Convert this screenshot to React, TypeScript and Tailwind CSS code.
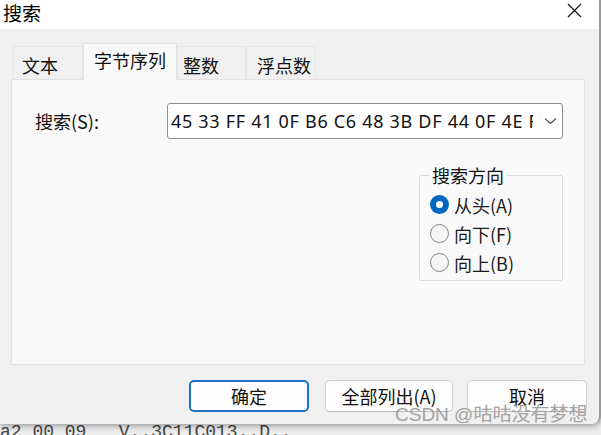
const cjk = "font-['Noto_Sans_CJK_SC',sans-serif]";

const Radio = ({ label, checked }: { label: string; checked?: boolean }) => (
    <div className="flex items-center h-[29px] gap-[5px]">
        {checked ? (
            <span className="w-[19px] h-[19px] rounded-full bg-[#0067c0] flex items-center justify-center">
                <span className="w-[7px] h-[7px] rounded-full bg-white" />
            </span>
        ) : (
            <span className="w-[19px] h-[19px] rounded-full border border-[#858585] bg-[#f6f6f6]" />
        )}
        <span className="text-[18px] leading-none text-[#1b1b1b]">{label}</span>
    </div>
);

const Tab = ({ label, w, pl, active }: { label: string; w: string; pl: string; active?: boolean }) =>
    active ? (
        <div className={`${w} h-[37px] -mb-px relative z-10 bg-[#f9f9f9] border border-b-0 border-[#e2e2e2] flex justify-center pt-[5px] text-[18px] leading-[22px] text-[#111]`}>
            {label}
        </div>
    ) : (
        <div className={`${w} ${pl} h-[33px] bg-[#f0f0f0] border border-b-0 border-[#e6e6e6] pt-[7px] text-[18px] leading-[22px] text-[#111]`}>
            {label}
        </div>
    );

const App = () => {
    return (
        <div className={`relative w-[601px] h-[435px] overflow-hidden bg-[#ededed] ${cjk}`}>
            <div className="relative z-10 h-[424px] flex flex-col bg-[#f0f0f0] border-r-2 border-[#9a9a9a] rounded-br-[8px] shadow-[0_2px_6px_rgba(0,0,0,0.35)]">
                {/* title bar */}
                <div className="h-[29px] bg-white flex justify-between items-start">
                    <span className="pl-[3px] pt-[1px] text-[19px] leading-[24px] text-black">搜索</span>
                    <svg width="15" height="15" viewBox="0 0 15 15" className="mt-[3px] mr-[17px]">
                        <path d="M1 1 L14 14 M14 1 L1 14" stroke="#1a1a1a" strokeWidth="1.3" />
                    </svg>
                </div>

                {/* tabs */}
                <div className="mt-[14px] ml-[13px] flex items-end h-[36px]">
                    <Tab label="文本" w="w-[70px]" pl="pl-[8px]" />
                    <Tab label="字节序列" w="w-[94px]" pl="" active />
                    <Tab label="整数" w="w-[69px]" pl="pl-[5px]" />
                    <Tab label="浮点数" w="w-[70px]" pl="pl-[10px]" />
                </div>

                {/* panel */}
                <div className="ml-[11px] w-[574px] h-[286px] border border-[#e2e2e2] bg-[#f9f9f9] pt-[23px] pl-[23px] pr-[21px] flex flex-col">
                    <div className="flex items-center justify-between h-[36px]">
                        <span className="text-[18px] leading-none text-[#111]">搜索(S):</span>
                        <div className="w-[396px] h-[36px] bg-white border border-[#8f8f8f] rounded-[3px] flex items-center">
                            <div className="w-[365px] pl-[3px] overflow-hidden whitespace-nowrap font-['Noto_Sans',sans-serif] text-[18px] tracking-[0.7px] leading-none text-[#111]">
                                45 33 FF 41 0F B6 C6 48 3B DF 44 0F 4E F8
                            </div>
                            <svg width="13" height="8" viewBox="0 0 13 8" className="ml-[11px]">
                                <path d="M1 1.5 L6.5 6.5 L12 1.5" fill="none" stroke="#555" strokeWidth="1.2" />
                            </svg>
                        </div>
                    </div>

                    <div className="self-end relative mt-[36px] w-[144px] h-[106px] border border-[#dcdcdc] rounded-[2px] pt-[14px] pl-[10px]">
                        <span className="absolute -top-[12px] left-[9px] px-[3px] bg-[#f9f9f9] text-[18px] leading-[22px] text-[#111]">
                            搜索方向
                        </span>
                        <Radio label="从头(A)" checked />
                        <Radio label="向下(F)" />
                        <Radio label="向上(B)" />
                    </div>
                </div>

                {/* buttons */}
                <div className="mt-[15px] flex justify-end pr-[12px] text-[18px] leading-none text-[#111]">
                    <button className="w-[120px] h-[32px] rounded-[5px] border-2 border-[#1a73c8] bg-[#fdfdfd]">确定</button>
                    <button className="ml-[16px] w-[128px] h-[32px] rounded-[5px] border border-[#d0d0d0] border-b-[#b8b8b8] bg-[#fdfdfd]">
                        全部列出(A)
                    </button>
                    <button className="ml-[14px] w-[120px] h-[32px] rounded-[5px] border border-[#d0d0d0] border-b-[#b8b8b8] bg-[#fdfdfd]">
                        取消
                    </button>
                </div>
            </div>

            {/* window behind */}
            <div className="-mt-[1px] whitespace-pre font-['Liberation_Mono',monospace] text-[18px] leading-[18px] text-[#444]">
                a2 00 09   V..3C11C013..D..
            </div>

            <span className="absolute z-20 left-[395px] top-[405px] font-['Liberation_Sans','Noto_Sans_CJK_SC',sans-serif] text-[19px] leading-none text-[#a3a3a3]">
                CSDN @咕咕没有梦想
            </span>
        </div>
    );
};

export default App;
